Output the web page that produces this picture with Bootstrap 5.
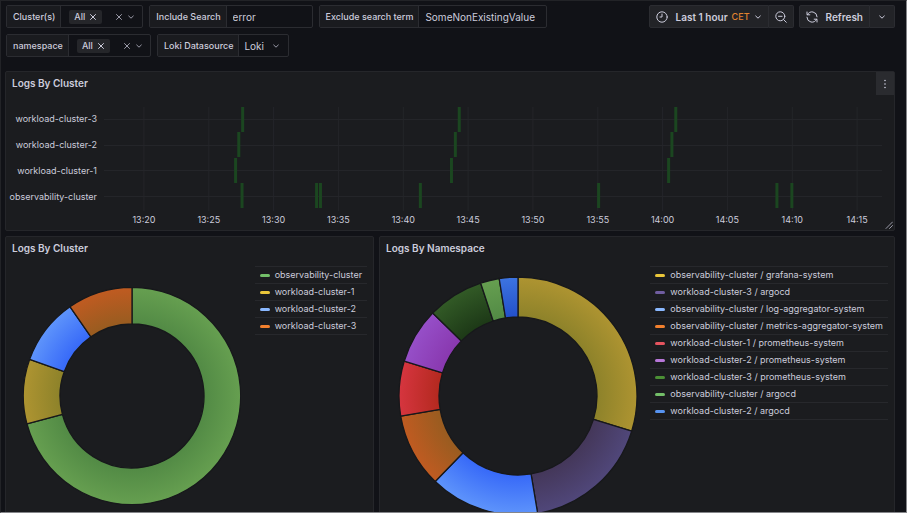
<!DOCTYPE html>
<html lang="en" data-bs-theme="dark">
<head>
<meta charset="utf-8">
<meta name="viewport" content="width=device-width, initial-scale=1">
<title>Logs dashboard</title>
<link href="https://cdn.jsdelivr.net/npm/bootstrap@5.3.0/dist/css/bootstrap.min.css" rel="stylesheet">
<style>
  :root { --canvas:#111217; --panel:#1b1c1f; --line:#2b2c31; --ink:#ccccdc; --soft:#9a9aa8; }
  body { background:var(--canvas); color:var(--ink); font-family:Inter,"Liberation Sans",sans-serif; font-size:9px; line-height:12px; }
  .dash { border:1px solid #222327; border-right-color:#85868a; border-bottom-color:#85868a; padding:4px 11px 0 4px; }
  .toolbar { padding-left:1px; }
  .filters { gap:3px 6px; }
  .field { height:23px; border:1px solid var(--line); border-radius:2px; }
  .field-label { background:#1a1b1f; border-right:1px solid var(--line); padding:0 5px 0 6px; font-weight:500; }
  .field input { background:transparent; border:0; color:var(--ink); font-size:10px; padding:0 6px; outline:0; }
  .w-include { width:85px; }
  .w-exclude { width:127px; }
  .pick { width:81px; padding:0 7px 0 8px; }
  .chip { background:#25262a; border-radius:2px; height:14px; padding:0 5px; gap:4px; font-weight:500; }
  .bare { background:none; border:0; padding:0; color:inherit; display:flex; align-items:center; }
  .ds { width:49px; padding:0 8px 0 5px; }
  .ds select { appearance:none; background:transparent; border:0; color:var(--ink); font-size:10px; padding:0; outline:0; width:26px; }
  svg.ico { fill:none; stroke:currentColor; stroke-width:1; stroke-linecap:round; stroke-linejoin:round; flex:none; }
  .soft { color:var(--soft); }
  .tools { gap:5px; }
  .tool { background:#222327; border:1px solid var(--line); color:var(--ink); height:23px; font-size:10px; line-height:12px; font-weight:600; padding:0 6px; border-radius:2px; display:flex; align-items:center; justify-content:center; min-width:25px; }
  .tz { color:#e0822f; font-size:9px; font-weight:500; }
  .panel { background:var(--panel); border:1px solid #25262a; border-radius:2px; }
  .panel h2 { color:var(--ink); font-size:10px; line-height:23px; font-weight:600; margin:0; padding-left:6px; }
  .kebab { width:18px; height:23px; background:#2a2b2f; justify-content:center; }
  .panels { gap:5px; margin-top:14px; }
  .ylabels { width:91px; padding-top:12px; }
  .ylabels div { height:26px; line-height:24px; text-align:right; }
  .plot { height:123px; margin:12px 12px 0 7px; }
  .plot text { fill:var(--ink); font-size:9px; text-anchor:middle; }
  .grid-lines line { stroke:#242529; }
  .cells rect { fill:#1b4620; }
  .grip { right:1px; bottom:1px; }
  .split { gap:5px; }
  .span10 { flex:10 1 0; }
  .span14 { flex:14 1 0; }
  .lower { height:330px; }
  .donut-a { width:218px; margin:27px 0 0 17px; }
  .donut-b { width:240px; margin:16px 0 0 18px; }
  .ring path { stroke:#17181b; stroke-width:1.3; stroke-linejoin:round; }
  .legend { margin:6px 6px 0 auto; border-collapse:collapse; }
  .legend td { height:17px; line-height:16px; border-top:1px solid #27282c; border-bottom:1px solid #27282c; padding:0 5px 0 0; white-space:nowrap; }
  .legend td:first-child { padding-left:5px; }
  .swatch { width:10px; height:3px; border-radius:2px; display:block; }
</style>
<script src="https://cdn.jsdelivr.net/npm/bootstrap@5.3.0/dist/js/bootstrap.bundle.min.js"></script>
</head>
<body>
<svg width="0" height="0" class="position-absolute" aria-hidden="true">
  <symbol id="x" viewBox="0 0 8 8"><path d="M1.500 1.500l5 5M6.500 1.500l-5 5"/></symbol>
  <symbol id="down" viewBox="0 0 8 8"><path d="M1.700 3l2.300 2.200L6.300 3"/></symbol>
</svg>
<main class="dash vh-100 overflow-hidden">
  <div class="toolbar d-flex justify-content-between align-items-start">
    <div class="filters d-flex flex-wrap">
      <div class="field d-flex">
        <span class="field-label d-flex align-items-center">Cluster(s)</span>
        <div class="pick d-flex align-items-center">
          <span class="chip d-flex align-items-center">All <button class="bare" aria-label="Remove All"><svg class="ico" width="8" height="8"><use href="#x"/></svg></button></span>
          <button class="bare soft ms-auto" aria-label="Clear clusters"><svg class="ico" width="8" height="8"><use href="#x"/></svg></button>
          <button class="bare soft ms-1" aria-label="Open clusters"><svg class="ico" width="8" height="8"><use href="#down"/></svg></button>
        </div>
      </div>
      <div class="field d-flex">
        <label class="field-label d-flex align-items-center" for="inc">Include Search</label>
        <input id="inc" class="w-include" type="text" value="error">
      </div>
      <div class="field d-flex">
        <label class="field-label d-flex align-items-center" for="exc">Exclude search term</label>
        <input id="exc" class="w-exclude" type="text" value="SomeNonExistingValue">
      </div>
      <div class="w-100"></div>
      <div class="field d-flex">
        <span class="field-label d-flex align-items-center">namespace</span>
        <div class="pick d-flex align-items-center">
          <span class="chip d-flex align-items-center">All <button class="bare" aria-label="Remove All"><svg class="ico" width="8" height="8"><use href="#x"/></svg></button></span>
          <button class="bare soft ms-auto" aria-label="Clear namespaces"><svg class="ico" width="8" height="8"><use href="#x"/></svg></button>
          <button class="bare soft ms-1" aria-label="Open namespaces"><svg class="ico" width="8" height="8"><use href="#down"/></svg></button>
        </div>
      </div>
      <div class="field d-flex">
        <label class="field-label d-flex align-items-center" for="ds">Loki Datasource</label>
        <div class="ds d-flex align-items-center justify-content-between">
          <select id="ds"><option>Loki</option></select>
          <svg class="ico soft" width="8" height="8"><use href="#down"/></svg>
        </div>
      </div>
    </div>
    <div class="tools d-flex flex-shrink-0">
      <div class="d-flex">
        <button class="tool rounded-end-0">
          <svg class="ico me-2" width="12" height="12" viewBox="0 0 12 12"><circle cx="6" cy="6" r="5.200"/><path d="M6 3v3H4"/></svg>Last 1 hour<span class="tz ms-1">CET</span>
          <svg class="ico ms-1" width="8" height="8"><use href="#down"/></svg>
        </button>
        <button class="tool border-start-0 rounded-start-0" aria-label="Zoom out">
          <svg class="ico" width="12" height="12" viewBox="0 0 12 12"><circle cx="5.300" cy="5.300" r="4.500"/><path d="M8.600 8.600L11.300 11.300M3.500 5.300h3.600"/></svg>
        </button>
      </div>
      <div class="d-flex">
        <button class="tool rounded-end-0">
          <svg class="ico me-2" width="12" height="12" viewBox="0 0 12 12"><path d="M1 1v2.800h2.800M1.400 3.800A5.100 5.100 0 0 1 11.100 5.800M11 11V8.200H8.200M10.600 8.200A5.100 5.100 0 0 1 .9 6.200"/></svg>Refresh
        </button>
        <button class="tool border-start-0 rounded-start-0" aria-label="Refresh interval"><svg class="ico" width="8" height="8"><use href="#down"/></svg></button>
      </div>
    </div>
  </div>

  <div class="panels d-flex flex-column">
    <section class="panel position-relative">
      <div class="d-flex justify-content-between">
        <h2>Logs By Cluster</h2>
        <button class="bare kebab" aria-label="Panel menu"><svg width="4" height="10" viewBox="0 0 4 10" fill="#ccccdc"><circle cx="2" cy="1.500" r=".8"/><circle cx="2" cy="5" r=".8"/><circle cx="2" cy="8.500" r=".8"/></svg></button>
      </div>
      <div class="d-flex">
        <div class="ylabels flex-shrink-0"><div>workload-cluster-3</div><div>workload-cluster-2</div><div>workload-cluster-1</div><div>observability-cluster</div></div>
        <div class="plot flex-fill"><svg id="heat" width="100%" height="122" class="overflow-visible d-block"></svg></div>
      </div>
      <svg class="ico soft grip position-absolute" width="8" height="8" viewBox="0 0 8 8"><path d="M1 7.500L7.500 1M4.500 7.500L7.500 4.500"/></svg>
    </section>

    <div class="split d-flex">
      <section class="panel span10 lower">
        <h2>Logs By Cluster</h2>
        <div class="d-flex align-items-start">
          <svg class="donut-a flex-shrink-0" viewBox="-109 -109 218 218" id="donutA"></svg>
          <table class="legend" id="legendA"></table>
        </div>
      </section>
      <section class="panel span14 lower">
        <h2>Logs By Namespace</h2>
        <div class="d-flex align-items-start">
          <svg class="donut-b flex-shrink-0" viewBox="-120 -120 240 240" id="donutB"></svg>
          <table class="legend" id="legendB"></table>
        </div>
      </section>
    </div>
  </div>
</main>
<script>
  // Heatmap: time axis in minutes after 13:00, rows top to bottom
  const start = 16.92, span = 60;
  const pct = m => ((m - start) / span * 100).toFixed(2) + '%';
  let grid = '', cells = '', ticks = '';
  for (let m = 20; m <= 75; m += 5) {
    grid += `<line x1="${pct(m)}" x2="${pct(m)}" y1="0" y2="104"/>`;
    const h = 13 + Math.floor(m / 60), mm = String(m % 60).padStart(2, '0');
    ticks += `<text x="${pct(m)}" y="116">${h}:${mm}</text>`;
  }
  [12, 38, 63, 89].forEach(y => grid += `<line x1="0" x2="100%" y1="${y + .5}" y2="${y + .5}"/>`);
  const rows = [[27.5, 44.2, 60.9], [27.2, 43.9, 60.6], [26.95, 43.6, 60.35], [27.45, 33.2, 33.5, 41.2, 54.95, 68.7, 69.85]];
  const tops = [0, 25, 51, 76];
  rows.forEach((r, i) => r.forEach(m => cells += `<rect x="${pct(m)}" y="${tops[i]}" width="3" height="25"/>`));
  document.getElementById('heat').innerHTML = `<g class="grid-lines">${grid}</g><g class="cells">${cells}</g>${ticks}`;

  // Donuts: each slice is [end angle, inner colour, outer colour]
  const pt = (r, deg) => `${(r * Math.sin(deg * Math.PI / 180)).toFixed(2)} ${(-r * Math.cos(deg * Math.PI / 180)).toFixed(2)}`;
  function donut(id, r0, r1, slices) {
    let defs = '', arcs = '', from = 0;
    slices.forEach(([to, a, b], i) => {
      const big = to - from > 180 ? 1 : 0;
      defs += `<radialGradient id="${id}g${i}" gradientUnits="userSpaceOnUse" cx="0" cy="0" r="${r1}"><stop offset="${r0 / r1}" stop-color="${a}"/><stop offset="1" stop-color="${b}"/></radialGradient>`;
      arcs += `<path fill="url(#${id}g${i})" d="M${pt(r1, from)}A${r1} ${r1} 0 ${big} 1 ${pt(r1, to)}L${pt(r0, to)}A${r0} ${r0} 0 ${big} 0 ${pt(r0, from)}Z"/>`;
      from = to;
    });
    document.getElementById(id).innerHTML = `<defs>${defs}</defs><g class="ring">${arcs}</g>`;
  }
  donut('donutA', 72, 108.7, [[255.2, '#528a45', '#669f50'], [289.7, '#8d822a', '#ae9431'], [325.2, '#3769f8', '#5e94fb'], [360, '#985c20', '#c05b21']]);
  donut('donutB', 79, 119, [[107.2, '#8d822a', '#ae9431'], [170.5, '#443759', '#50477a'], [224.1, '#3769f8', '#5e94fb'], [260.3, '#985c20', '#c05b21'], [287, '#b3291f', '#d6353f'], [314.2, '#8938af', '#964fc8'], [341.7, '#1d3917', '#325a26'], [350.9, '#528a45', '#669f50'], [360, '#2350cb', '#3d74e0']]);

  const legend = (id, items) => document.getElementById(id).innerHTML = items.map(([c, t]) =>
    `<tr><td><span class="swatch" style="background:${c}"></span></td><td>${t}</td></tr>`).join('');
  legend('legendA', [['#73bf69', 'observability-cluster'], ['#eac63a', 'workload-cluster-1'], ['#8ab8ff', 'workload-cluster-2'], ['#f2802e', 'workload-cluster-3']]);
  legend('legendB', [['#eac63a', 'observability-cluster / grafana-system'], ['#705da0', 'workload-cluster-3 / argocd'], ['#8ab8ff', 'observability-cluster / log-aggregator-system'], ['#f2802e', 'observability-cluster / metrics-aggregator-system'], ['#e5545f', 'workload-cluster-1 / prometheus-system'], ['#b877d9', 'workload-cluster-2 / prometheus-system'], ['#4b8f35', 'workload-cluster-3 / prometheus-system'], ['#73bf69', 'observability-cluster / argocd'], ['#5794f2', 'workload-cluster-2 / argocd']]);
</script>
</body>
</html>
